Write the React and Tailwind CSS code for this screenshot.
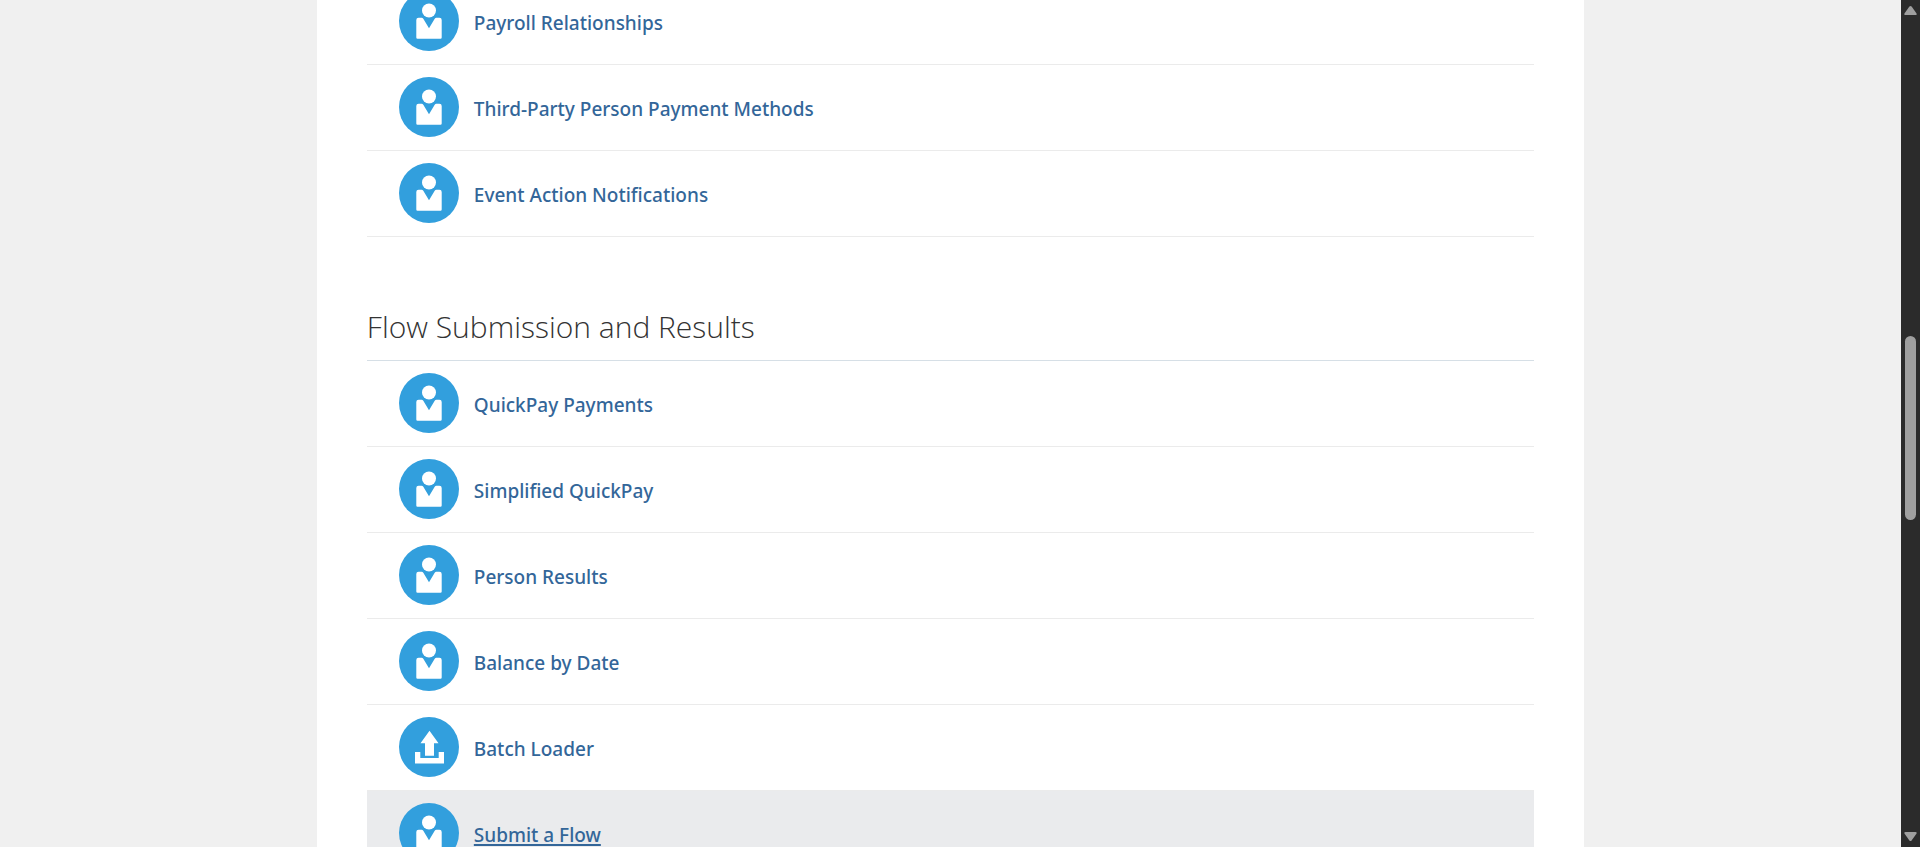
const personTasks = [
  "Payroll Relationships",
  "Third-Party Person Payment Methods",
  "Event Action Notifications",
];

const flowTasks = [
  "QuickPay Payments",
  "Simplified QuickPay",
  "Person Results",
  "Balance by Date",
  "Batch Loader",
  "Submit a Flow",
];

function PersonIcon() {
  return (
    <svg viewBox="0 0 60 60" className="size-[60px] shrink-0" aria-hidden="true">
      <circle cx="30" cy="30" r="30" fill="#329fdd" />
      <circle cx="30" cy="19.5" r="7" fill="#fff" />
      <path d="M19.6 26.8h3q1.1 0 1.7 1L30 37.2l5.7-9.4q.6-1 1.7-1h3q2.3 0 2.3 2.3v17.4q0 1.2-1.2 1.2h-23q-1.2 0-1.2-1.2V29.1q0-2.3 2.3-2.3z" fill="#fff" />
    </svg>
  );
}

function UploadIcon() {
  return (
    <svg viewBox="0 0 60 60" className="size-[60px] shrink-0" aria-hidden="true">
      <circle cx="30" cy="30" r="30" fill="#329fdd" />
      <path d="M30.5 13.8 39.5 26.2H35v12.5h-9V26.2h-4.5z" fill="#fff" />
      <path d="M16 35h5.3v6H39.7v-6H45v11.5H16z" fill="#fff" />
    </svg>
  );
}

function TaskList({ tasks, active }) {
  return (
    <ul>
      {tasks.map((task) => (
        <li
          key={task}
          className={
            task === active
              ? "border-b border-[#eaebed] bg-[#eaebed]"
              : "border-b border-[#ebebeb]"
          }
        >
          <a
            href="#"
            className="flex items-center gap-[15px] px-8 pt-3 pb-[13px] font-['Noto_Sans','Open_Sans',sans-serif] text-[19px] leading-7 font-medium text-[#336699]"
          >
            {task === "Batch Loader" ? <UploadIcon /> : <PersonIcon />}
            <span className={task === active ? "pt-1 underline decoration-2 underline-offset-2" : "pt-1"}>{task}</span>
          </a>
        </li>
      ))}
    </ul>
  );
}

function ScrollTrack() {
  return (
    <div className="flex w-[19px] shrink-0 flex-col items-center bg-[#2b2b2b] py-[5px]" aria-hidden="true">
      <svg viewBox="0 0 13 11" className="h-[11px] w-[13px]">
        <path d="M5.4 1.6q1.1-1.4 2.2 0l4.8 6.6q.9 1.9-1 1.9H1.6q-1.9 0-1-1.9z" fill="#9f9f9f" />
      </svg>
      <div className="flex w-full grow flex-col items-center">
        <div className="grow-[320]" />
        <div className="w-[11px] grow-[184] rounded-full bg-[#9f9f9f]" />
        <div className="grow-[311]" />
      </div>
      <svg viewBox="0 0 13 11" className="h-[11px] w-[13px]">
        <path d="M5.4 9.4q1.1 1.4 2.2 0l4.8-6.6q.9-1.9-1-1.9H1.6q-1.9 0-1 1.9z" fill="#9f9f9f" />
      </svg>
    </div>
  );
}

export default function App() {
  return (
    <div className="flex h-screen overflow-hidden bg-[#f0f0f0]">
      <div className="min-w-0 grow overflow-hidden">
        <main className="mx-auto min-h-full w-2/3 bg-white px-[50px]">
          <section className="-mt-[21px]">
            <TaskList tasks={personTasks} />
          </section>
          <section>
            <h2 className="border-b border-[#d6dfe6] pt-[68px] pb-[11px] font-['Open_Sans','Noto_Sans',sans-serif] text-3xl leading-[44px] font-light text-[#333333]">
              Flow Submission and Results
            </h2>
            <TaskList tasks={flowTasks} active="Submit a Flow" />
          </section>
        </main>
      </div>
      <ScrollTrack />
    </div>
  );
}
